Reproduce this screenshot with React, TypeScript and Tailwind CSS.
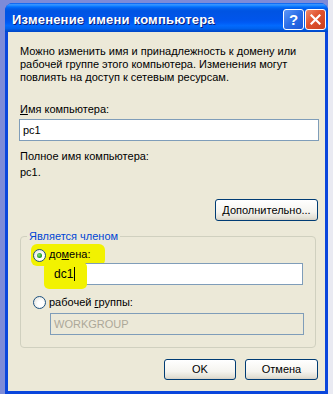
import React from 'react';

const Radio: React.FC<{ checked?: boolean }> = ({ checked }) => (
  <span className="relative flex h-[13px] w-[13px] shrink-0 items-center justify-center rounded-full border border-[#1c5180] bg-[radial-gradient(circle_at_60%_60%,#ffffff_30%,#dcdcd3_100%)]">
    {checked && (
      <span className="h-[5px] w-[5px] rounded-full bg-[radial-gradient(circle_at_40%_40%,#8be08b_0%,#21a121_60%,#137013_100%)]" />
    )}
  </span>
);

const XpButton: React.FC<{ className?: string; children: React.ReactNode }> = ({ className, children }) => (
  <div
    className={
      'flex items-center justify-center rounded-[3px] border border-[#003c74] bg-[linear-gradient(to_bottom,#ffffff_0%,#f5f4ef_60%,#e3e0d5_90%,#d6d0c5_100%)] text-black ' +
      (className ?? '')
    }
  >
    {children}
  </div>
);

const App: React.FC = () => {
  return (
    <div className="flex h-[394px] w-[333px] overflow-hidden bg-[#7d8bd8] font-['Liberation_Sans',Arial,sans-serif] text-[11px] leading-[13px] text-black">
      <div className="w-[5px] shrink-0" />

      {/* window */}
      <div className="mt-[3px] flex h-[391px] w-[323px] shrink-0 flex-col rounded-t-[8px] bg-[#0a46dc]">
        <div className="flex h-[29px] items-center rounded-t-[8px] bg-[linear-gradient(to_bottom,#0058ee_0%,#3593ff_5%,#288eff_8%,#127dff_11%,#036ffc_14%,#0262ee_18%,#0057e5_24%,#0054e3_30%,#0055eb_58%,#005bf5_68%,#026afe_78%,#0062ef_88%,#0052d6_94%,#0046c8_100%)] pl-[7px] pr-[2px] pt-[3px]">
          <span className="flex-1 font-bold text-[13px] tracking-[0.2px] text-white [text-shadow:1px_1px_0_#0a1d7a]">
            Изменение имени компьютера
          </span>
          <div className="flex gap-[1px]">
            <div className="flex h-[21px] w-[21px] items-center justify-center rounded-[3px] border border-white bg-[linear-gradient(135deg,#5e97f7_0%,#2b6ee8_50%,#1c56d4_100%)] text-[15px] font-bold leading-none text-white">
              ?
            </div>
            <div className="flex h-[21px] w-[21px] items-center justify-center rounded-[3px] border border-white bg-[linear-gradient(135deg,#f08a6a_0%,#e0512d_45%,#c9401d_100%)]">
              <svg width="11" height="11" viewBox="0 0 11 11">
                <path d="M1.5 1.5 L9.5 9.5 M9.5 1.5 L1.5 9.5" stroke="#fff" strokeWidth="2.2" strokeLinecap="square" />
              </svg>
            </div>
          </div>
        </div>

        {/* client area */}
        <div className="mx-[3px] mb-[3px] flex flex-1 flex-col bg-[#ece9d8]">
          <div className="ml-[12px] mt-[13px]">
            <div className="whitespace-nowrap">Можно изменить имя и принадлежность к домену или</div>
            <div className="whitespace-nowrap">рабочей группе этого компьютера. Изменения могут</div>
            <div className="whitespace-nowrap">повлиять на доступ к сетевым ресурсам.</div>
          </div>

          <div className="ml-[12px] mt-[19px]">
            <span className="underline underline-offset-1">И</span>мя компьютера:
          </div>
          <div className="ml-[11px] mt-[3px] flex h-[22px] w-[300px] items-center border border-[#7f9db9] bg-white pl-[3px]">
            pc1
          </div>

          <div className="ml-[12px] mt-[9px]">Полное имя компьютера:</div>
          <div className="ml-[12px] mt-[3px]">pc1.</div>

          <div className="mr-[7px] mt-[20px] flex justify-end">
            <XpButton className="h-[22px] w-[103px]">
              <span>
                <span className="underline underline-offset-1">Д</span>ополнительно...
              </span>
            </XpButton>
          </div>

          <fieldset className="ml-[12px] mr-[9px] mt-[9px] rounded-[4px] border border-[#d0d0bf] pb-[12px]">
            <legend className="ml-[6px] px-[2px] text-[#0046d5]">Является членом</legend>
            <div className="relative ml-[10px] mt-[1px] flex h-[19px] w-[74px] items-start gap-[3px] pl-[2px] pt-[5px]">
              <span className="absolute left-0 top-0 h-[22px] w-[74px] rounded-[6px] bg-[#f2f200]" />
              <span className="relative">
                <Radio checked />
              </span>
              <span className="relative -mt-[1px]">
                до<span className="underline underline-offset-1">м</span>ена:
              </span>
            </div>
            <div className="relative ml-[29px] flex h-[22px] w-[253px] items-center border border-[#7f9db9] bg-white pl-[3px]">
              <span className="absolute -left-[7px] -top-[2px] h-[27px] w-[43px] rounded-[5px] bg-[#f2f200]" />
              <span className="relative text-[12px]">dc1</span>
              <span className="relative ml-[1px] h-[14px] w-[1px] bg-black" />
            </div>

            <div className="ml-[12px] mt-[11px] flex items-center gap-[3px]">
              <Radio />
              <span>
                рабочей <span className="underline underline-offset-1">г</span>руппы:
              </span>
            </div>
            <div className="ml-[29px] mt-[4px] flex h-[22px] w-[254px] items-center border border-[#7f9db9] bg-[#ece9d8] pl-[3px] text-[#aca899]">
              WORKGROUP
            </div>
          </fieldset>

          <div className="mr-[7px] mt-[11px] flex justify-end gap-[9px]">
            <XpButton className="h-[21px] w-[72px]">OK</XpButton>
            <XpButton className="h-[21px] w-[73px]">Отмена</XpButton>
          </div>
        </div>
      </div>

      <div className="flex-1 bg-[#e9eaf2]" />
    </div>
  );
};

export default App;
